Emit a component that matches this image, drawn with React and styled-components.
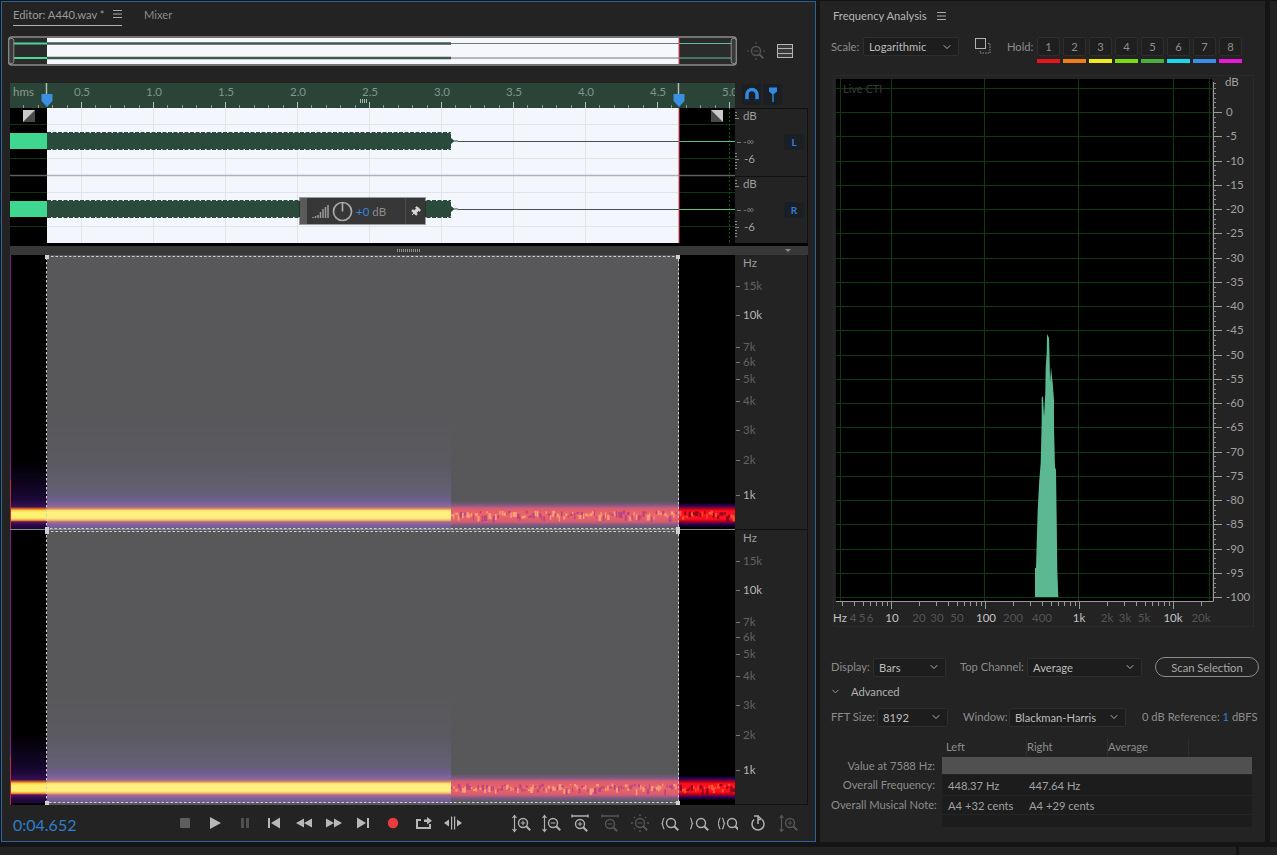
import React from 'react';
import styled, { createGlobalStyle } from 'styled-components';
import { ChevronDown, Pin } from 'lucide-react';

const GlobalStyle = createGlobalStyle`
  html, body { margin: 0; padding: 0; background: #141414; }
  body {
    font-family: 'Lato', 'Noto Sans', sans-serif;
    font-size: 11.2px;
    color: #9a9a9a;
    overflow: hidden;
  }
`;

const SELECT_X = 37;
const SELECT_END = 669;
const LOUD_END = 441;
const PX_PER_SEC = 144;

// tiny seeded random so the spectrogram noise stays put between renders
function seeded(seed) {
  let s = seed;
  return () => {
    s = (s * 16807) % 2147483647;
    return s / 2147483647;
  };
}

function Hamburger() {
  return (
    <svg width="9" height="8" viewBox="0 0 9 8">
      <path d="M0 .5h9M0 4h9M0 7.5h9" stroke="#a8a8a8" strokeWidth="1" fill="none" />
    </svg>
  );
}

function Overview() {
  return (
    <svg width="729" height="30" viewBox="0 0 729 30">
      <rect x="1" y="1" width="727" height="28" rx="3" fill="#2b2b2b" />
      <rect x="39" y="2" width="632" height="26" fill="#f5f7fd" />
      <path d="M4 7.500h35M4 22h35" stroke="#49d796" strokeWidth="2" />
      <path d="M39 7.500h404M39 22h404" stroke="#3f5a4d" strokeWidth="2.400" />
      <path d="M443 7.500h228M443 22h228" stroke="#777" strokeWidth="1" />
      <path d="M671 7.500h54M671 22h54" stroke="#5ec295" strokeWidth="1" />
      <path d="M671 2v26" stroke="#e2424f" strokeWidth="1" />
      <rect x="0.800" y="1" width="727.400" height="28" rx="3" fill="none" stroke="#8c8c8c" strokeWidth="1.600" />
      <rect x="0.800" y="2.500" width="5" height="25" rx="2" fill="#3a3a3a" stroke="#8c8c8c" />
      <rect x="723.200" y="2.500" width="5" height="25" rx="2" fill="#3a3a3a" stroke="#8c8c8c" />
    </svg>
  );
}

function Ruler() {
  const ticks = [];
  for (let i = 0; i <= 51; i++) {
    const x = -0.500 + Math.round((i * PX_PER_SEC) / 10);
    const big = i % 5 === 0;
    ticks.push(<path key={i} d={`M${x} 25v${big ? -6 : -3}`} stroke={big ? '#b5c0ba' : '#8b9b93'} strokeWidth="1" />);
  }
  const labels = ['0.5', '1.0', '1.5', '2.0', '2.5', '3.0', '3.5', '4.0', '4.5', '5.0'];
  return (
    <svg width="725" height="25" viewBox="0 0 725 25">
      <rect width="725" height="25" fill="#2a4538" />
      {ticks}
      <text x="3" y="13" fontSize="11.5" fill="#8c9a93">hms</text>
      {labels.map((l, i) => (
        <text key={l} x={(i + 1) * 72} y="13" fontSize="11.5" textAnchor="middle" fill="#7d9789">{l}</text>
      ))}
      <path d="M350.500 20v-4M352.500 20v-4M354.500 20v-4M356.500 20v-4" stroke="#cfd6d2" strokeWidth="0.800" />
      <path d="M36.500 0v11M668.500 0v11" stroke="#b5c0ba" strokeWidth="1.400" />
      <path d="M31.500 11h11v7l-5.500 6-5.500-6zM663.500 11h11v7l-5.500 6-5.500-6z" fill="#3a8fe0" />
    </svg>
  );
}

function ChannelWave({ y }) {
  return (
    <g>
      <rect x="0" y={y - 8} width={SELECT_X} height="16" fill="#3fd690" />
      <path
        d={`M${SELECT_X} ${y - 8}H${LOUD_END - 1}l1 1v4l3 2.500h4v1h-4l-3 2.500v4l-1 1H${SELECT_X}z`}
        fill="#2a4a3c"
      />
      <path d={`M${SELECT_X} ${y - 8.500}H${LOUD_END}M${SELECT_X} ${y + 8.500}H${LOUD_END}`} stroke="#2a4a3c" strokeDasharray="4 1.500" fill="none" />
      <path d={`M${LOUD_END + 7} ${y + 0.500}H${SELECT_END}`} stroke="#47534d" strokeWidth="1" />
      <path d={`M${SELECT_END} ${y + 0.500}H725`} stroke="#54c08c" strokeWidth="1" />
    </g>
  );
}

function FadeCorner({ x, flip }) {
  return (
    <g transform={`translate(${x} 2)`}>
      <rect width="12" height="12" fill="#c9c9c9" />
      <path d={flip ? 'M0 0L12 12H0z' : 'M12 0V12H0z'} fill="#4a4a4a" />
    </g>
  );
}

function WaveView() {
  const gridX = [];
  for (let i = 1; i <= 8; i++) gridX.push(-0.500 + i * 72);
  const gridY = [16.500, 50.500, 84.500, 118.500];
  return (
    <svg width="725" height="135" viewBox="0 0 725 135" style={{ display: 'block' }}>
      <rect width="725" height="135" fill="#000" />
      <rect x={SELECT_X} width={SELECT_END - SELECT_X} height="135" fill="#f4f6fd" />
      {gridX.map((x) => <path key={x} d={`M${x} 0v135`} stroke="#e2e6e2" />)}
      {gridY.map((y) => (
        <g key={y}>
          <path d={`M0 ${y}H${SELECT_X}`} stroke="#0b360f" />
          <path d={`M${SELECT_X} ${y}H${SELECT_END}`} stroke="#e2e6e2" />
          <path d={`M${SELECT_END} ${y}H725`} stroke="#0b360f" />
        </g>
      ))}
      <path d={`M0 67.500H${SELECT_X}M${SELECT_END} 67.500H725`} stroke="#5e5e5e" strokeWidth="1.500" />
      <path d={`M${SELECT_X} 67.500H${SELECT_END}`} stroke="#b2b2b6" strokeWidth="1.500" />
      <path d="M719.500 0v135" stroke="#0e5c18" strokeDasharray="2 2" />
      <ChannelWave y={33} />
      <ChannelWave y={101} />
      <path d={`M${SELECT_END} 0v135`} stroke="#e2424f" strokeWidth="1" />
      <FadeCorner x={13} />
      <FadeCorner x={701} flip />
    </svg>
  );
}

function DbAxis() {
  const minor = [3.500, 6.500, 9.500, 44.500, 47.500, 50.500, 53.500, 56.500, 59.500];
  return (
    <svg width="50" height="67" viewBox="0 0 50 67">
      {minor.map((y) => <path key={y} d={`M0 ${y}h${y === 9.500 || y === 50.500 ? 4 : 2}`} stroke="#8a8a8a" />)}
      <text x="8" y="11" fontSize="11.5" fill="#9c9c9c">dB</text>
      <text x="8" y="36" fontSize="10" fill="#7b7b7b">-∞</text>
      <text x="9" y="54" fontSize="11.5" fill="#9c9c9c">-6</text>
      <path d="M2 33.500h4" stroke="#777" />
    </svg>
  );
}

const FREQ_MARKS = [
  ['15k', 31, true], ['10k', 60, false], ['7k', 92, true], ['6k', 107, true],
  ['5k', 124, true], ['4k', 146, true], ['3k', 175, true], ['2k', 205, true], ['1k', 240, false],
];

function FreqAxis() {
  return (
    <svg width="72" height="274" viewBox="0 0 72 274" style={{ display: 'block' }}>
      <text x="8" y="12" fontSize="11.5" fill="#9c9c9c">Hz</text>
      {FREQ_MARKS.map(([label, y, dim]) => (
        <g key={label}>
          <path d={`M1 ${y + 0.500}h4`} stroke="#777" />
          <text x="8" y={y + 4} fontSize="11.5" fill={dim ? '#626262' : '#b5b5b5'}>{label}</text>
        </g>
      ))}
    </svg>
  );
}

function SpectralNoise({ rand }) {
  const blobs = [];
  for (let x = LOUD_END; x < 725; x += 2.200) {
    const dark = x > SELECT_END;
    const h = 1.500 + rand() * 5;
    const y = 255.500 + rand() * 6;
    const pick = rand();
    let fill = pick > 0.5 ? '#f8aa78' : '#b04088';
    if (dark) fill = pick > 0.5 ? '#ff6030' : '#7a0020';
    blobs.push(
      <rect key={x} x={x} y={y} width={1 + rand() * 2} height={h} fill={fill} opacity={0.85} />
    );
  }
  return <g filter="url(#soft)">{blobs}</g>;
}

function SpectralBand({ offset, seed }) {
  const rand = seeded(seed);
  return (
    <g transform={`translate(0 ${offset})`}>
      <rect x="0" y="205" width={SELECT_X} height="33" fill="url(#hazeDark)" />
      <rect x={SELECT_X} y="165" width={LOUD_END - SELECT_X} height="73" fill="url(#hazeSel)" />
      <rect x="0" y="238" width={SELECT_X} height="37" fill="url(#loudDark)" />
      <rect x={SELECT_X} y="238" width={LOUD_END - SELECT_X} height="37" fill="url(#loudSel)" />
      <rect x={LOUD_END} y="246" width={SELECT_END - LOUD_END} height="28" fill="url(#quietSel)" />
      <rect x={SELECT_END} y="246" width={725 - SELECT_END} height="28" fill="url(#quietDark)" />
      <SpectralNoise rand={rand} />
    </g>
  );
}

function Handles({ top, bottom }) {
  const spots = [[SELECT_X - 2, top - 2], [SELECT_END - 3, top - 2], [SELECT_X - 2, bottom - 2], [SELECT_END - 3, bottom - 2]];
  return spots.map(([x, y]) => <rect key={`${x}-${y}`} x={x} y={y} width="4" height="4" fill="#cfcfcf" />);
}

function SpectralView() {
  return (
    <svg width="725" height="550" viewBox="0 0 725 550" style={{ display: 'block' }}>
      <defs>
        <filter id="soft" x="-5%" y="-50%" width="110%" height="200%"><feGaussianBlur stdDeviation="0.6" /></filter>
        <linearGradient id="hazeDark" x1="0" y1="0" x2="0" y2="1">
          <stop offset="0" stopColor="#000" />
          <stop offset="1" stopColor="#14062a" />
        </linearGradient>
        <linearGradient id="hazeSel" x1="0" y1="0" x2="0" y2="1">
          <stop offset="0" stopColor="#58585b" />
          <stop offset="0.6" stopColor="#5b5a62" />
          <stop offset="1" stopColor="#655f75" />
        </linearGradient>
        <linearGradient id="loudSel" x1="0" y1="0" x2="0" y2="1">
          <stop offset="0" stopColor="#655f75" />
          <stop offset="0.2" stopColor="#6e5f92" />
          <stop offset="0.37" stopColor="#8f6a98" />
          <stop offset="0.43" stopColor="#e09060" />
          <stop offset="0.47" stopColor="#ffe070" />
          <stop offset="0.52" stopColor="#fff080" />
          <stop offset="0.68" stopColor="#fff080" />
          <stop offset="0.74" stopColor="#f4b060" />
          <stop offset="0.78" stopColor="#a86c90" />
          <stop offset="0.88" stopColor="#7a5f9c" />
          <stop offset="1" stopColor="#6a5f8c" />
        </linearGradient>
        <linearGradient id="loudDark" x1="0" y1="0" x2="0" y2="1">
          <stop offset="0" stopColor="#14062a" />
          <stop offset="0.2" stopColor="#1d0a3c" />
          <stop offset="0.37" stopColor="#3a1050" />
          <stop offset="0.43" stopColor="#e0702a" />
          <stop offset="0.47" stopColor="#ffd040" />
          <stop offset="0.52" stopColor="#fff070" />
          <stop offset="0.68" stopColor="#fff070" />
          <stop offset="0.74" stopColor="#f09030" />
          <stop offset="0.78" stopColor="#5a1060" />
          <stop offset="0.88" stopColor="#240a46" />
          <stop offset="1" stopColor="#1a0838" />
        </linearGradient>
        <linearGradient id="quietSel" x1="0" y1="0" x2="0" y2="1">
          <stop offset="0" stopColor="#58585b" />
          <stop offset="0.14" stopColor="#7a5a86" />
          <stop offset="0.26" stopColor="#d85c70" />
          <stop offset="0.5" stopColor="#ee6666" />
          <stop offset="0.74" stopColor="#d85c70" />
          <stop offset="0.86" stopColor="#7a5a86" />
          <stop offset="1" stopColor="#58585b" />
        </linearGradient>
        <linearGradient id="quietDark" x1="0" y1="0" x2="0" y2="1">
          <stop offset="0.06" stopColor="#000" />
          <stop offset="0.18" stopColor="#300060" />
          <stop offset="0.28" stopColor="#c00010" />
          <stop offset="0.36" stopColor="#ff1020" />
          <stop offset="0.64" stopColor="#ff1020" />
          <stop offset="0.72" stopColor="#c00010" />
          <stop offset="0.82" stopColor="#300060" />
          <stop offset="0.94" stopColor="#000" />
        </linearGradient>
      </defs>
      <rect width="725" height="550" fill="#000" />
      <rect x={SELECT_X} width={SELECT_END - SELECT_X} height="550" fill="#58585b" />
      <SpectralBand offset={0} seed={4711} />
      <SpectralBand offset={273} seed={9173} />
      <path d="M0.500 0V550" stroke="#7a1f86" />
      <path d="M0.500 225V275M0.500 500V550" stroke="#c02a3a" />
      <path d="M0 274.500H725" stroke="#8a8a8a" />
      <rect x={SELECT_X - 0.500} y="1.500" width={SELECT_END - SELECT_X} height="272" fill="none" stroke="#cfcfcf" strokeDasharray="2.500 2" />
      <rect x={SELECT_X - 0.500} y="276.500" width={SELECT_END - SELECT_X} height="271" fill="none" stroke="#cfcfcf" strokeDasharray="2.500 2" />
      <Handles top={2} bottom={274} />
      <Handles top={277} bottom={548} />
    </svg>
  );
}

/* transport icons */
const TRANSPORT = [
  { key: 'stop', color: '#5e5e5e', d: <rect x="5" y="5" width="10" height="10" rx="1" /> },
  { key: 'play', color: '#b8b8b8', d: <path d="M5 4l11 6-11 6z" /> },
  { key: 'pause', color: '#505050', d: <path d="M6 5h3v10H6zM11 5h3v10h-3z" /> },
  { key: 'start', color: '#b8b8b8', d: <path d="M4 5h2v10H4zM16 4.500v11L7 10z" /> },
  { key: 'rew', color: '#b8b8b8', d: <path d="M10 5.500v9L2 10zM18 5.500v9L10 10z" /> },
  { key: 'ff', color: '#b8b8b8', d: <path d="M2 5.500v9l8-4.500zM10 5.500v9l8-4.500z" /> },
  { key: 'end', color: '#b8b8b8', d: <path d="M4 4.500v11l9-5.500zM14 5h2v10h-2z" /> },
  { key: 'rec', color: '#ec3b3f', d: <circle cx="10" cy="10" r="5.200" /> },
  {
    key: 'loop',
    color: '#b8b8b8',
    d: <path d="M3 6h5v2H5v6h11v-3h2v5H3zM11 9V6.500h3V4l5 3.700-5 3.700V9z" />,
  },
  {
    key: 'skip',
    color: '#b8b8b8',
    d: <path d="M8 3.500h1.200v13H8zM11 3.500h1.200v13H11zM1 10l5-3.500v7zM19 10l-5-3.500v7z" />,
  },
];

function Lens({ x = 11, y = 11, sign, color }) {
  return (
    <g stroke={color} fill="none" strokeWidth="1.400">
      <circle cx={x} cy={y} r="4.500" />
      <path d={`M${x + 3.200} ${y + 3.200}l4 4`} strokeWidth="2" />
      {sign === '+' && <path d={`M${x - 2.300} ${y}h4.600M${x} ${y - 2.300}v4.600`} strokeWidth="1.100" />}
      {sign === '-' && <path d={`M${x - 2.300} ${y}h4.600`} strokeWidth="1.100" />}
    </g>
  );
}

const VBar = ({ color }) => (
  <path d="M3.500 3v15M1.500 5l2-2.500 2 2.500M1.500 16l2 2.500 2-2.500" stroke={color} fill="none" strokeWidth="1.200" />
);
const HBar = ({ color }) => (
  <path d="M2 3h16M2 1.500v3M18 1.500v3" stroke={color} fill="none" strokeWidth="1.400" />
);
const BraceL = ({ color, x = 0 }) => (
  <path d={`M${x + 4.500} 5c-2 0-1 4-2.500 5.500 1.500 1.500.5 5.500 2.500 5.500`} stroke={color} fill="none" strokeWidth="1.200" />
);
const BraceR = ({ color, x = 0 }) => (
  <path d={`M${x + 1} 5c2 0 1 4 2.500 5.500-1.500 1.500-.5 5.500-2.500 5.500`} stroke={color} fill="none" strokeWidth="1.200" />
);

const BRIGHT = '#b0b0b0';
const DIM = '#555';

const ZOOM_TOOLS = [
  { key: 'ampIn', draw: () => <><VBar color={BRIGHT} /><Lens x={12} y={10} sign="+" color={BRIGHT} /></> },
  { key: 'ampOut', draw: () => <><VBar color={BRIGHT} /><Lens x={12} y={10} sign="-" color={BRIGHT} /></> },
  { key: 'timeIn', draw: () => <><HBar color={BRIGHT} /><Lens x={10} y={11} sign="+" color={BRIGHT} /></> },
  { key: 'timeOut', draw: () => <><HBar color={DIM} /><Lens x={10} y={11} sign="-" color={DIM} /></> },
  {
    key: 'fit',
    draw: () => (
      <>
        <Lens x={10} y={10} sign="-" color={DIM} />
        <path d="M10 1v2M10 17v2M1 10h2M17 10h2M4 4l1 1M16 4l-1 1M4 16l1-1" stroke={DIM} fill="none" strokeWidth="1.400" />
      </>
    ),
  },
  { key: 'left', draw: () => <><BraceL color={BRIGHT} x={1} /><Lens x={12} y={10} color={BRIGHT} /></> },
  { key: 'right', draw: () => <><BraceR color={BRIGHT} x={0} /><Lens x={12} y={10} color={BRIGHT} /></> },
  { key: 'both', draw: () => <><BraceL color={BRIGHT} x={-2} /><BraceR color={BRIGHT} x={3} /><Lens x={14} y={10} color={BRIGHT} /></> },
  {
    key: 'history',
    draw: () => (
      <>
        <path d="M6 6.500a6 6 0 1 0 8 0" stroke={BRIGHT} fill="none" strokeWidth="1.500" />
        <path d="M10 11V3M6 3h5M10 3l3 3-3 1" stroke={BRIGHT} fill="none" strokeWidth="1.500" />
      </>
    ),
  },
  { key: 'sel', draw: () => <><VBar color={DIM} /><Lens x={12} y={10} sign="+" color={DIM} /></> },
];

/* hold track colours, taken off the reference */
const HOLD_COLORS = ['#e8131c', '#f07d14', '#f4ec1a', '#7cdc14', '#4caf3c', '#18d8ec', '#3a8ee8', '#e81ad8'];

const GREEN_PEAK = [
  [1035, 597], [1035, 568], [1036, 568], [1036.7, 543], [1037.7, 510], [1039.3, 480], [1040.7, 463],
  [1041.7, 420], [1041.7, 398], [1043, 396], [1044, 417], [1045.3, 393], [1045.7, 367], [1046.7, 353],
  [1047, 334], [1049, 338], [1049.7, 363], [1050, 383], [1051, 367], [1052.7, 383], [1054, 400],
  [1054, 427], [1055, 467], [1056, 470], [1056.7, 520], [1057.3, 570], [1058.3, 597],
].map((p) => p.join(',')).join(' ');

const FREQ_LABELS = [
  ['Hz', 840, true], ['4', 853], ['5', 862], ['6', 870], ['10', 892, true], ['20', 919], ['30', 937], ['50', 957],
  ['100', 986, true], ['200', 1013], ['400', 1042], ['1k', 1079, true], ['2k', 1107], ['3k', 1125], ['5k', 1144],
  ['10k', 1173, true], ['20k', 1201],
];

function AnalysisChart() {
  const dbLines = [88.500];
  const dbLabels = [];
  for (let i = 0; i <= 20; i++) {
    const y = Math.round(112 + i * 24.25) + 0.500;
    dbLines.push(y);
    dbLabels.push([i === 0 ? '0' : `-${i * 5}`, y]);
  }
  const minorDb = [];
  for (let y = 83; y <= 600; y += 4.85) minorDb.push(Math.round(y) + 0.500);
  const freqTicks = [];
  [797, 891, 985, 1079, 1173].forEach((base) => {
    for (let m = 1; m < 10; m++) {
      const x = Math.round(base + 94 * Math.log10(m)) + 0.500;
      if (x > 838 && x < 1213) freqTicks.push([x, m === 1]);
    }
  });
  return (
    <svg width="421" height="552" viewBox="833 75 421 552" style={{ display: 'block' }}>
      <rect x="836" y="79" width="376" height="522" fill="#000" />
      {dbLines.map((y) => <path key={y} d={`M836 ${y}H1212`} stroke="#0f3a10" />)}
      {[840.500, 891.500, 984.500, 1078.500, 1173.500, 1209.500].map((x) => <path key={x} d={`M${x} 79V601`} stroke="#0f3a10" />)}
      <text x="843" y="93" fontSize="11" fill="#3a3a3a">Live CTI</text>
      <polygon points={GREEN_PEAK} fill="#5cb890" />
      <path d="M836 601.500H1213.500M1213.500 82V601" stroke="#9a9a9a" fill="none" />
      {minorDb.map((y) => <path key={y} d={`M1213 ${y}h3`} stroke="#8a8a8a" />)}
      {dbLabels.map(([l, y]) => (
        <g key={l}>
          <path d={`M1213 ${y}h9`} stroke="#9a9a9a" />
          <text x="1226" y={y + 3.500} fontSize="11.5" fill="#a0a0a0">{l}</text>
        </g>
      ))}
      <text x="1225" y="86" fontSize="11.5" fill="#a0a0a0">dB</text>
      {freqTicks.map(([x, big]) => <path key={x} d={`M${x} 602v${big ? 7 : 4}`} stroke="#9a9a9a" />)}
      {FREQ_LABELS.map(([l, x, bright]) => (
        <text key={l} x={x} y="622" fontSize="11.5" textAnchor="middle" fill={bright ? '#c4c4c4' : '#555'}>{l}</text>
      ))}
    </svg>
  );
}

function Dropdown({ w, children }) {
  return (
    <Select $w={w}>
      <span>{children}</span>
      <ChevronDown size={12} color="#b0b0b0" strokeWidth={2} />
    </Select>
  );
}

export default function App() {
  return (
    <Page>
      <GlobalStyle />
      <Workspace>
        <EditorPanel>
          <TabBar>
            <ActiveTab>
              Editor: A440.wav *
              <Hamburger />
            </ActiveTab>
            <Tab>Mixer</Tab>
          </TabBar>
          <OverviewRow>
            <Overview />
            <OverviewTools>
              <svg width="20" height="20" viewBox="0 0 20 20">
                <Lens x={10} y={10} sign="-" color="#555" />
                <path d="M10 1v2M10 17v2M1 10h2M17 10h2" stroke="#555" />
              </svg>
              <svg width="16" height="14" viewBox="0 0 16 14">
                <rect x="0.500" y="0.500" width="15" height="13" fill="#3a3a3a" stroke="#b4b4b4" />
                <path d="M1 4.500h14M1 9.500h14" stroke="#b4b4b4" strokeWidth="1.200" />
              </svg>
            </OverviewTools>
          </OverviewRow>
          <RulerRow>
            <Ruler />
            <SnapButtons>
              <SnapButton>
                <svg width="16" height="16" viewBox="0 0 16 16">
                  <path d="M3 14V7.500a5 5 0 0 1 10 0V14" fill="none" stroke="#2f8ae6" strokeWidth="3.400" />
                  <path d="M1.300 13h3.400M11.300 13h3.400" stroke="#0b2440" strokeWidth="2" />
                </svg>
              </SnapButton>
              <SnapButton>
                <svg width="10" height="17" viewBox="0 0 10 17">
                  <path d="M1 1.500h8v4L6 8H5.700v8H4.300V8H4L1 5.500z" fill="#2f8ae6" />
                </svg>
              </SnapButton>
            </SnapButtons>
          </RulerRow>
          <WaveRow>
            <WaveView />
            <ScaleColumn>
              <DbChannel>
                <DbAxis />
                <ChannelBadge>L</ChannelBadge>
              </DbChannel>
              <DbChannel $last>
                <DbAxis />
                <ChannelBadge>R</ChannelBadge>
              </DbChannel>
            </ScaleColumn>
            <GainHud>
              <HudGrip />
              <svg width="17" height="15" viewBox="0 0 17 15">
                <path d="M1 14v-1M3.500 14v-2M6 14v-3M8.500 14V8M11 14V5M13.500 14V3M16 14V1" stroke="#9a9a9a" strokeWidth="1.500" />
              </svg>
              <svg width="21" height="21" viewBox="0 0 21 21">
                <circle cx="10.500" cy="10.500" r="9" fill="none" stroke="#a8a8a8" strokeWidth="1.700" />
                <path d="M10.500 1.500v9" stroke="#a8a8a8" strokeWidth="1.700" />
              </svg>
              <HudValue><b>+0</b> dB</HudValue>
              <HudPin>
                <Pin size={11} color="#d8d8d8" fill="#d8d8d8" style={{ transform: 'rotate(45deg)' }} />
              </HudPin>
            </GainHud>
          </WaveRow>
          <DividerBar>
            <Grip />
            <DividerCaret />
          </DividerBar>
          <SpectralRow>
            <SpectralView />
            <FreqColumn>
              <FreqAxis />
              <FreqDivider />
              <FreqAxis />
            </FreqColumn>
          </SpectralRow>
          <TransportBar>
            <TimeCode>0:04.652</TimeCode>
            <ButtonGroup>
              {TRANSPORT.map((t) => (
                <ToolButton key={t.key} $w={29.7}>
                  <svg width="20" height="20" viewBox="0 0 20 20" fill={t.color}>{t.d}</svg>
                </ToolButton>
              ))}
            </ButtonGroup>
            <ZoomGroup>
              {ZOOM_TOOLS.map((t) => (
                <ToolButton key={t.key} $w={29.6}>
                  <svg width="20" height="20" viewBox="0 0 20 20">{t.draw()}</svg>
                </ToolButton>
              ))}
            </ZoomGroup>
          </TransportBar>
        </EditorPanel>
        <AnalysisPanel>
          <PanelTitle>
            Frequency Analysis
            <Hamburger />
          </PanelTitle>
          <ScaleRow>
            <FieldLabel $w={32}>Scale:</FieldLabel>
            <Dropdown w={96}>Logarithmic</Dropdown>
            <SnapshotIcon>
              <svg width="16" height="16" viewBox="0 0 16 16">
                <rect x="0.500" y="0.500" width="10" height="10" fill="none" stroke="#b0b0b0" />
                <path d="M13 5.500h2V15H5v-2" fill="none" stroke="#8a8a8a" strokeDasharray="1.500 1" />
              </svg>
            </SnapshotIcon>
            <FieldLabel $w={30}>Hold:</FieldLabel>
            <HoldGroup>
              {HOLD_COLORS.map((c, i) => (
                <HoldSlot key={c}>
                  <HoldButton>{i + 1}</HoldButton>
                  <HoldBar $color={c} />
                </HoldSlot>
              ))}
            </HoldGroup>
          </ScaleRow>
          <ChartFrame>
            <AnalysisChart />
          </ChartFrame>
          <FieldRow $top={30}>
            <FieldLabel $w={42}>Display:</FieldLabel>
            <Dropdown w={73}>Bars</Dropdown>
            <FieldLabel $w={67} $left={14}>Top Channel:</FieldLabel>
            <Dropdown w={115}>Average</Dropdown>
            <PillButton>Scan Selection</PillButton>
          </FieldRow>
          <AdvancedRow>
            <ChevronDown size={11} color="#a0a0a0" strokeWidth={2} />
            Advanced
          </AdvancedRow>
          <FieldRow $top={6}>
            <FieldLabel $w={46}>FFT Size:</FieldLabel>
            <Dropdown w={71}>8192</Dropdown>
            <FieldLabel $w={46} $left={15}>Window:</FieldLabel>
            <Dropdown w={117}>Blackman-Harris</Dropdown>
            <FieldLabel $left={16}>0 dB Reference: <Accent>1</Accent> dBFS</FieldLabel>
          </FieldRow>
          <StatsHeader>
            <StatsHead>Left</StatsHead>
            <StatsHead>Right</StatsHead>
            <StatsHead>Average</StatsHead>
          </StatsHeader>
          <StatRow>
            <StatLabel>Value at 7588 Hz:</StatLabel>
            <StatCells $h={17} $hot />
          </StatRow>
          <StatRow>
            <StatLabel>Overall Frequency:</StatLabel>
            <StatCells $h={21}>
              <StatCell>448.37 Hz</StatCell>
              <StatCell>447.64 Hz</StatCell>
            </StatCells>
          </StatRow>
          <StatRow>
            <StatLabel>Overall Musical Note:</StatLabel>
            <StatCells $h={19}>
              <StatCell>A4 +32 cents</StatCell>
              <StatCell>A4 +29 cents</StatCell>
            </StatCells>
          </StatRow>
          <StatRow>
            <StatLabel />
            <StatCells $h={13} />
          </StatRow>
        </AnalysisPanel>
        <EdgePanel />
      </Workspace>
      <BottomStrip>
        <BottomCell $w={1236} />
        <BottomCell />
      </BottomStrip>
    </Page>
  );
}

const Page = styled.div`
  width: 1277px;
  height: 855px;
  padding-top: 1px;
  box-sizing: border-box;
  display: flex;
  flex-direction: column;
  overflow: hidden;
`;

const Workspace = styled.div`
  display: flex;
  height: 841px;
  padding-left: 1px;
`;

const EditorPanel = styled.section`
  width: 815px;
  box-sizing: border-box;
  border: 1px solid #2a6399;
  background: #232323;
  display: flex;
  flex-direction: column;
`;

const TabBar = styled.div`
  height: 34px;
  display: flex;
  align-items: flex-start;
  padding-left: 11px;
  gap: 22px;
`;

const ActiveTab = styled.div`
  height: 23px;
  width: 109px;
  box-sizing: border-box;
  margin-top: 1px;
  border-bottom: 1px solid #b0b0b0;
  display: flex;
  align-items: center;
  justify-content: space-between;
  color: #9a9a9a;
`;

const Tab = styled.div`
  height: 23px;
  margin-top: 1px;
  display: flex;
  align-items: center;
  color: #8a8a8a;
`;

const OverviewRow = styled.div`
  display: flex;
  align-items: center;
  height: 30px;
  padding-left: 6px;
`;

const OverviewTools = styled.div`
  display: flex;
  align-items: center;
  gap: 11px;
  margin-left: 9px;
`;

const RulerRow = styled.div`
  display: flex;
  margin: 17px 0 0 8px;
  height: 25px;

  svg {
    display: block;
  }
`;

const SnapButtons = styled.div`
  display: flex;
  gap: 2px;
  margin-left: 7px;
`;

const SnapButton = styled.div`
  width: 19px;
  height: 21px;
  margin-top: 1px;
  background: #1b1e22;
  border-radius: 2px;
  display: flex;
  align-items: center;
  justify-content: center;
`;

const WaveRow = styled.div`
  position: relative;
  display: flex;
  margin-left: 8px;
  width: 798px;
  height: 135px;
`;

const ScaleColumn = styled.div`
  width: 73px;
  box-sizing: border-box;
  border-right: 1px solid #111;
  border-top: 1px solid #111;
  display: flex;
  flex-direction: column;
`;

const DbChannel = styled.div`
  flex: 1;
  display: flex;
  align-items: center;
  border-bottom: ${({ $last }) => ($last ? 'none' : '1px solid #111')};
`;

const ChannelBadge = styled.div`
  width: 20px;
  height: 16px;
  margin: -2px 0 0 -1px;
  border-radius: 2px;
  background: #1a1e25;
  color: #2f7fd4;
  font-size: 10px;
  font-weight: 700;
  display: flex;
  align-items: center;
  justify-content: center;
`;

const GainHud = styled.div`
  position: absolute;
  left: 290px;
  top: 90px;
  width: 125px;
  height: 26px;
  background: #373737;
  display: flex;
  align-items: center;
  gap: 3px;
  box-shadow: 0 0 0 1px rgba(20, 20, 20, 0.4);
`;

const HudGrip = styled.div`
  width: 7px;
  height: 100%;
  margin-right: 2px;
  background: #5a5a5a;
`;

const HudValue = styled.div`
  font-size: 11.500px;
  color: #8e8e8e;

  b {
    color: #2f86de;
    font-weight: 400;
  }
`;

const HudPin = styled.div`
  margin-left: auto;
  width: 19px;
  height: 100%;
  border-left: 1px solid #4c4c4c;
  display: flex;
  align-items: center;
  justify-content: center;
`;

const DividerBar = styled.div`
  position: relative;
  margin-left: 8px;
  width: 798px;
  height: 12px;
  box-sizing: border-box;
  border-top: 3px solid #000;
  background: #383838;
  display: flex;
  align-items: center;
  justify-content: flex-end;
`;

const Grip = styled.div`
  position: absolute;
  left: 387px;
  top: 3px;
  width: 23px;
  height: 3px;
  background: repeating-linear-gradient(90deg, #8d8d8d 0 1px, transparent 1px 2px);
`;

const DividerCaret = styled.div`
  margin-right: 17px;
  width: 0;
  height: 0;
  border-left: 3px solid transparent;
  border-right: 3px solid transparent;
  border-top: 3px solid #8a8a8a;
`;

const SpectralRow = styled.div`
  display: flex;
  margin-left: 8px;
  width: 798px;
  height: 550px;
`;

const FreqColumn = styled.div`
  width: 73px;
  box-sizing: border-box;
  border-right: 1px solid #111;
  border-bottom: 1px solid #111;
  display: flex;
  flex-direction: column;
`;

const FreqDivider = styled.div`
  height: 1px;
  background: #111;
`;

const TransportBar = styled.div`
  flex: 1;
  display: flex;
  align-items: center;
  padding-left: 11px;
`;

const TimeCode = styled.div`
  width: 157.500px;
  padding-top: 2px;
  font-size: 16px;
  color: #2d7fcb;
`;

const ButtonGroup = styled.div`
  display: flex;
`;

const ZoomGroup = styled(ButtonGroup)`
  margin-left: 39px;
`;

const ToolButton = styled.div`
  width: ${({ $w }) => $w}px;
  height: 24px;
  display: flex;
  align-items: center;
  justify-content: center;
`;

const AnalysisPanel = styled.section`
  width: 445px;
  margin-left: 4px;
  background: #232323;
  display: flex;
  flex-direction: column;
`;

const PanelTitle = styled.div`
  height: 29px;
  display: flex;
  align-items: center;
  gap: 10px;
  padding-left: 13px;
  color: #b5b5b5;
`;

const ScaleRow = styled.div`
  display: flex;
  align-items: flex-start;
  height: 27px;
  margin-top: 7px;
  padding-left: 11px;
`;

const FieldLabel = styled.div`
  flex: none;
  width: ${({ $w }) => ($w ? `${$w}px` : 'auto')};
  margin-left: ${({ $left }) => $left || 0}px;
  line-height: 20px;
  color: #8c8c8c;
  white-space: nowrap;
`;

const Select = styled.div`
  flex: none;
  width: ${({ $w }) => $w}px;
  height: 19px;
  box-sizing: border-box;
  background: #1d1d1d;
  border: 1px solid #2e2e2e;
  border-radius: 2px;
  padding: 0 5px;
  display: flex;
  align-items: center;
  justify-content: space-between;
  color: #bcbcbc;
`;

const SnapshotIcon = styled.div`
  margin: 1px 16px 0;
  height: 16px;
`;

const HoldGroup = styled.div`
  display: flex;
  gap: 3px;
`;

const HoldSlot = styled.div`
  display: flex;
  flex-direction: column;
  gap: 3px;
`;

const HoldButton = styled.div`
  width: 23px;
  height: 19px;
  box-sizing: border-box;
  background: #1f1f1f;
  border: 1px solid #2e2e2e;
  border-radius: 2px;
  display: flex;
  align-items: center;
  justify-content: center;
  color: #8e8e8e;
`;

const HoldBar = styled.div`
  height: 4px;
  background: ${({ $color }) => $color};
`;

const ChartFrame = styled.div`
  margin: 11px 0 0 13px;
  width: 421px;
  height: 552px;
  box-shadow: inset 0 0 0 1px #2b2b2b;
`;

const FieldRow = styled.div`
  display: flex;
  align-items: center;
  height: 20px;
  margin-top: ${({ $top }) => $top}px;
  padding-left: 11px;
`;

const PillButton = styled.div`
  flex: none;
  width: 104px;
  height: 20px;
  margin-left: 13px;
  box-sizing: border-box;
  border: 1.500px solid #8c8c8c;
  border-radius: 10px;
  display: flex;
  align-items: center;
  justify-content: center;
  color: #a8a8a8;
`;

const AdvancedRow = styled.div`
  display: flex;
  align-items: center;
  height: 19px;
  margin-top: 5px;
  padding-left: 10px;
  gap: 10px;
  color: #b0b0b0;
`;

const Accent = styled.span`
  color: #2f7fd4;
`;

const StatsHeader = styled.div`
  display: flex;
  height: 18px;
  margin-top: 12px;
  padding-left: 126px;
`;

const StatsHead = styled.div`
  width: 81px;
  box-sizing: border-box;
  border-right: 1px solid #2e2e2e;
  line-height: 15px;
  color: #8c8c8c;
`;

const StatRow = styled.div`
  display: flex;
  align-items: center;
  padding-left: 11px;
`;

const StatLabel = styled.div`
  width: 104px;
  margin-right: 7px;
  text-align: right;
  white-space: nowrap;
  color: #8c8c8c;
`;

const StatCells = styled.div`
  width: 310px;
  height: ${({ $h }) => $h}px;
  box-sizing: border-box;
  border-top: 1px solid ${({ $hot }) => ($hot ? '#505050' : '#242424')};
  background: ${({ $hot }) => ($hot ? '#505050' : '#1c1c1c')};
  display: flex;
  align-items: center;
`;

const StatCell = styled.div`
  width: 81px;
  box-sizing: border-box;
  padding-left: 6px;
  white-space: nowrap;
  color: #a0a0a0;
`;

const EdgePanel = styled.div`
  flex: 1;
  margin-left: 5px;
  background: #232323;
`;

const BottomStrip = styled.div`
  display: flex;
  flex: 1;
  margin-top: 5px;
  gap: 3px;
`;

const BottomCell = styled.div`
  flex: ${({ $w }) => ($w ? 'none' : 1)};
  width: ${({ $w }) => ($w ? `${$w}px` : 'auto')};
  background: #232323;
`;
